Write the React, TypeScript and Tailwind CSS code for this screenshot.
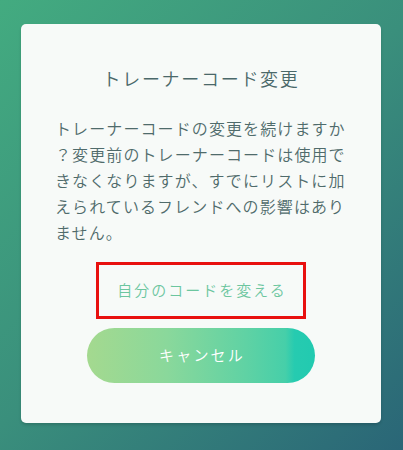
import React from 'react'

const bodyLines = [
  'トレーナーコードの変更を続けますか',
  '？変更前のトレーナーコードは使用で',
  'きなくなりますが、すでにリストに加',
  'えられているフレンドへの影響はあり',
  'ません。',
]

export default function App() {
  return (
    <div
      className="w-[403px] h-[450px] overflow-hidden bg-[linear-gradient(135deg,#43ab80_0%,#3a8f7c_50%,#2a6677_100%)] pt-[24px] px-[21px]"
      style={{ fontFamily: '"Noto Sans CJK JP", "Noto Sans", sans-serif' }}
    >
      <div className="flex h-[399px] w-[360px] flex-col items-center rounded-[5px] bg-[#f7faf8] pt-[41px] shadow-[0_2px_3px_rgba(0,0,0,0.15)]">
        {/* タイトル */}
        <h1 className="text-[18px] font-[350] leading-[26px] tracking-[1.7px] text-[#4a6869]">
          トレーナーコード変更
        </h1>

        {/* 本文 */}
        <p className="mt-[24px] w-[292px] text-[16px] font-[350] leading-[26px] tracking-[1.1px] text-[#4f6b6b]">
          {bodyLines.map((line) => (
            <span key={line} className="block whitespace-nowrap">
              {line}
            </span>
          ))}
        </p>

        {/* 自分のコードを変える */}
        <button className="mt-[17px] flex h-[57px] w-[210px] items-center justify-center border-[3px] border-[#e8100f] pl-[2px] text-[15px] font-[350] tracking-[2px] text-[#6cc69f]">
          自分のコードを変える
        </button>

        {/* キャンセル */}
        <button className="mt-[9px] flex h-[55px] w-[228px] items-center justify-center rounded-full bg-[linear-gradient(to_right,#a4d98f_0%,#8ad89b_35%,#5fd2a4_70%,#46cfa9_87%,#26cbb0_91%,#22cab0_100%)] pl-[2px] text-[15px] font-[350] tracking-[2.2px] text-white">
          キャンセル
        </button>
      </div>
    </div>
  )
}
